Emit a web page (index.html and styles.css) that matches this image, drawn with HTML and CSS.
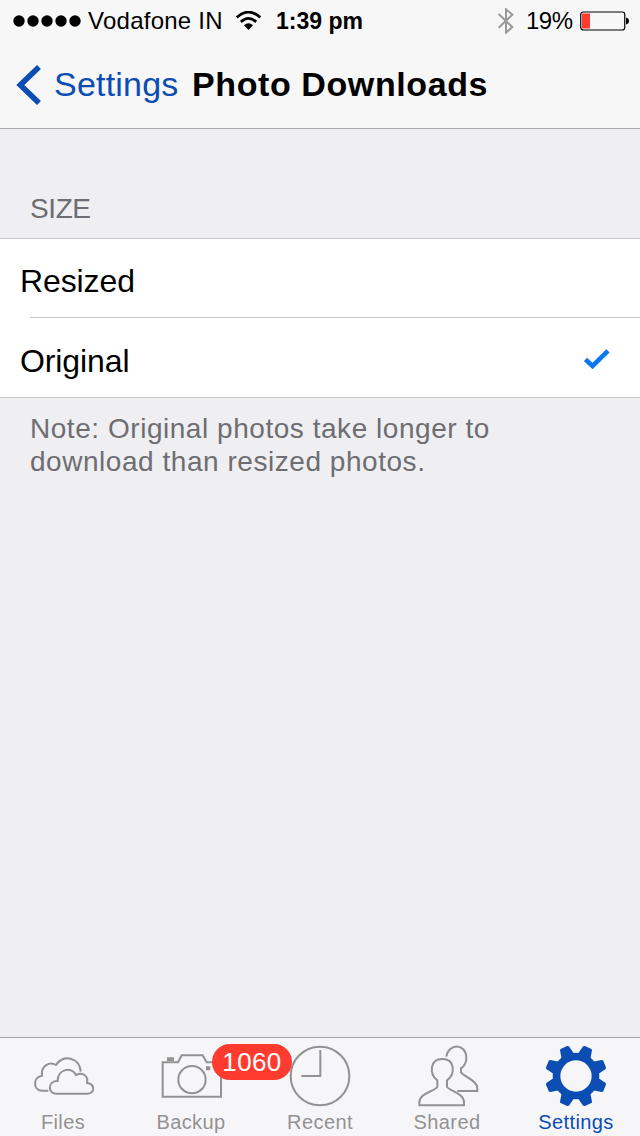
FILE: index.html
```html
<!DOCTYPE html>
<html lang="en">
<head>
    <meta charset="UTF-8">
    <meta name="viewport" content="width=device-width, initial-scale=1.0">
    <title>Photo Downloads</title>
    <link rel="stylesheet" href="styles.css">
</head>
<body>
    <div class="screen">
        <header class="header">
            <div class="status-bar">
                <svg class="signal" viewBox="0 0 68 12">
                    <circle cx="6" cy="6" r="5.7"/>
                    <circle cx="20" cy="6" r="5.7"/>
                    <circle cx="34" cy="6" r="5.7"/>
                    <circle cx="48" cy="6" r="5.7"/>
                    <circle cx="62" cy="6" r="5.7"/>
                </svg>
                <span class="carrier">Vodafone IN</span>
                <svg class="wifi" viewBox="0 0 72 54">
                    <path d="M2 18Q36 -12 70 18" fill="none" stroke="#000" stroke-width="8"/>
                    <path d="M14 31Q36 11 58 31" fill="none" stroke="#000" stroke-width="8"/>
                    <path d="M23 41Q36 29 49 41L36 54Z"/>
                </svg>
                <span class="time">1:39 pm</span>
                <svg class="bluetooth" viewBox="0 0 48 78">
                    <path d="M2 18L43 57L24 74V4L43 20L2 59" fill="none" stroke="#999" stroke-width="6"/>
                </svg>
                <span class="percent">19%</span>
                <svg class="battery" viewBox="0 0 49 20">
                    <rect x="0.75" y="1" width="44" height="18" rx="2.5" fill="none" stroke="#000" stroke-width="1.2"/>
                    <rect x="2" y="2.5" width="8" height="15" fill="#ff3b30"/>
                    <path d="M46 6.5C50 7 50 13 46 13.5Z"/>
                </svg>
            </div>
            <nav class="nav-bar">
                <a class="back">
                    <svg class="chevron" viewBox="0 0 26 40">
                        <path d="M23 2L4.3 20L23 38" fill="none" stroke="#0b4db3" stroke-width="5.6"/>
                    </svg>
                    <span>Settings</span>
                </a>
                <h1 class="title">Photo Downloads</h1>
            </nav>
        </header>

        <main class="content">
            <h2 class="section-title">SIZE</h2>
            <ul class="options">
                <li class="option">Resized</li>
                <li class="option selected">
                    <span>Original</span>
                    <svg class="check" viewBox="0 0 26 20">
                        <path d="M1.5 10.5L8.5 17L24 1.8" fill="none" stroke="#0a78ee" stroke-width="4.6"/>
                    </svg>
                </li>
            </ul>
            <p class="note">Note: Original photos take longer to<br>download than resized photos.</p>
        </main>

        <footer class="tab-bar">
            <a class="tab files">
                <svg class="tab-icon" viewBox="0 24 384 216">
                    <path d="M145 182H124C98 179 99 140 126 137C122 106 149 94 168 105C188 71 240 82 242 125"/>
                    <path d="M168 191C143 190 142 153 173 153C172 116 217 109 228 135C245 126 267 136 261 159C286 162 285 191 263 191Z"/>
                </svg>
                <span>Files</span>
            </a>
            <a class="tab backup">
                <svg class="tab-icon" viewBox="-36 24 384 216">
                    <path d="M68 97H114L125 76H188L200 97H243V200H68Z"/>
                    <circle cx="156" cy="149" r="41"/>
                    <path class="solid" d="M81 82H102V93H81ZM198 109H211V121H198Z"/>
                </svg>
                <span>Backup</span>
                <span class="badge">1060</span>
            </a>
            <a class="tab recent">
                <svg class="tab-icon" viewBox="-42 24 384 216">
                    <circle cx="150" cy="138" r="88"/>
                    <path d="M151 60V138H94"/>
                </svg>
                <span>Recent</span>
            </a>
            <a class="tab shared">
                <svg class="tab-icon" viewBox="-18 24 384 216">
                    <path d="M169 80C175 39 229 39 229 84C229 101 222 109 213 115V127C224 142 262 151 262 175V183H202"/>
                    <path d="M142 151C117 132 119 87 157 87C195 87 197 132 171 151V171C180 183 222 190 222 217V226H88V217C88 190 133 184 142 171Z"/>
                </svg>
                <span>Shared</span>
            </a>
            <a class="tab settings active">
                <svg class="tab-icon" viewBox="-24 24 384 216">
                    <defs>
                        <path id="tooth" d="M147 78L153 49Q154 45 158 45H178Q182 45 183 49L189 78Z"/>
                    </defs>
                    <circle class="ring" cx="168" cy="138" r="58.5"/>
                    <g class="teeth">
                        <use href="#tooth" transform="rotate(22.5 168 138)"/>
                        <use href="#tooth" transform="rotate(67.5 168 138)"/>
                        <use href="#tooth" transform="rotate(112.5 168 138)"/>
                        <use href="#tooth" transform="rotate(157.5 168 138)"/>
                        <use href="#tooth" transform="rotate(202.5 168 138)"/>
                        <use href="#tooth" transform="rotate(247.5 168 138)"/>
                        <use href="#tooth" transform="rotate(292.5 168 138)"/>
                        <use href="#tooth" transform="rotate(337.5 168 138)"/>
                    </g>
                </svg>
                <span>Settings</span>
            </a>
        </footer>
    </div>
</body>
</html>
```
FILE: styles.css
```css
:root {
    --blue: #0b4db3;
    --grey: #929292;
    --line: #c8c7cc;
}

* {
    box-sizing: border-box;
}

body {
    margin: 0;
    font-family: "Liberation Sans", Arial, sans-serif;
    color: #000;
}

.screen {
    display: flex;
    flex-direction: column;
    width: 640px;
    height: 1136px;
    background-color: #efeff2;
    overflow: hidden;
}

.header {
    height: 129px;
    background-color: #f7f7f7;
    border-bottom: 1px solid #a9a9ab;
}

.status-bar {
    display: flex;
    align-items: center;
    height: 41px;
    padding-left: 13px;
    font-size: 24px;
    white-space: nowrap;
}

.signal {
    width: 68px;
    height: 12px;
    margin-right: 7px;
}

.carrier {
    width: 148px;
    padding-top: 1px;
    letter-spacing: 0.25px;
}

.wifi {
    width: 25px;
    height: 19px;
    margin-right: 15px;
}

.time {
    padding-top: 1px;
    font-size: 23px;
    font-weight: bold;
}

.bluetooth {
    width: 16px;
    height: 26px;
    margin-left: auto;
    margin-right: 12px;
}

.percent {
    width: 54px;
    padding-top: 1px;
    letter-spacing: -0.5px;
}

.battery {
    width: 49px;
    height: 20px;
    margin-right: 11px;
}

.nav-bar {
    display: flex;
    align-items: center;
    height: 87px;
    padding-left: 16px;
    font-size: 34px;
}

.back {
    display: flex;
    align-items: center;
    width: 176px;
    color: var(--blue);
    letter-spacing: 0.2px;
}

.chevron {
    width: 26px;
    height: 40px;
    margin-right: 12px;
}

.title {
    margin: 0;
    font-size: 34px;
    letter-spacing: 0.6px;
    white-space: nowrap;
}

.content {
    flex: 1;
}

.section-title {
    margin: 0;
    padding: 63px 0 0 30px;
    height: 109px;
    font-size: 28px;
    font-weight: normal;
    line-height: 33px;
    letter-spacing: -0.4px;
    color: #6d6d72;
}

.options {
    margin: 0;
    padding: 0;
    list-style: none;
    background-color: #fff;
    border-top: 1px solid var(--line);
    border-bottom: 1px solid var(--line);
}

.option {
    display: flex;
    align-items: center;
    justify-content: space-between;
    height: 78px;
    padding: 6px 30px 0 20px;
    font-size: 32px;
    letter-spacing: -0.1px;
}

.selected {
    position: relative;
    height: 80px;
    padding-top: 8px;
}

/* inset separator */
.selected::before {
    content: "";
    position: absolute;
    top: 0;
    left: 30px;
    right: 0;
    height: 1px;
    background-color: var(--line);
}

.check {
    width: 26px;
    height: 20px;
    margin-bottom: 5px;
}

.note {
    margin: 0;
    padding: 14px 0 0 30px;
    font-size: 28px;
    line-height: 33px;
    letter-spacing: 0.54px;
    color: #6d6d72;
}

.tab-bar {
    display: flex;
    height: 99px;
    background-color: #f6f6f8;
    border-top: 1px solid #a5a5a8;
}

.tab {
    position: relative;
    display: flex;
    flex-direction: column;
    align-items: center;
    width: 128px;
    font-size: 20px;
    line-height: 24px;
    letter-spacing: 0.4px;
    color: var(--grey);
}

.files span,
.backup span,
.shared span {
    margin-right: 2px;
}

.tab-icon {
    width: 128px;
    height: 72px;
    fill: none;
    stroke: var(--grey);
    stroke-width: 6;
}

.solid {
    fill: var(--grey);
    stroke: none;
}

.active {
    color: var(--blue);
}

.ring {
    stroke: var(--blue);
    stroke-width: 23;
}

.teeth {
    fill: var(--blue);
    stroke: none;
}

.badge {
    position: absolute;
    top: 6px;
    left: 84px;
    z-index: 1;
    width: 80px;
    height: 36px;
    border-radius: 18px;
    background-color: #ff3b30;
    color: #fff;
    font-size: 26px;
    line-height: 37px;
    text-align: center;
}
```
